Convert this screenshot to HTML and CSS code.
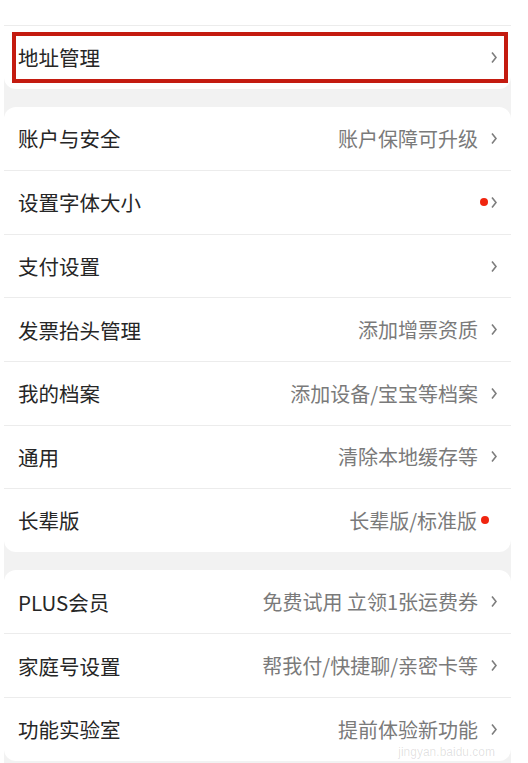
FILE: index.html
```html
<!DOCTYPE html>
<html lang="zh-CN">
<head>
  <meta charset="UTF-8">
  <meta name="viewport" content="width=device-width, initial-scale=1.0">
  <title>设置</title>
  <link rel="stylesheet" href="styles.css">
</head>
<body>
  <div class="screen">
    <div class="group top">
      <div class="spacer"></div>
      <div class="row marked">
        <span class="label">地址管理</span>
        <span class="extra"><svg class="chev" viewBox="0 0 6 13"><path d="M1 1.5 L5 6.5 L1 11.5"/></svg></span>
      </div>
    </div>

    <div class="group">
      <div class="row">
        <span class="label">账户与安全</span>
        <span class="extra">账户保障可升级<svg class="chev gap" viewBox="0 0 6 13"><path d="M1 1.5 L5 6.5 L1 11.5"/></svg></span>
      </div>
      <div class="row">
        <span class="label">设置字体大小</span>
        <span class="extra"><i class="dot"></i><svg class="chev" viewBox="0 0 6 13"><path d="M1 1.5 L5 6.5 L1 11.5"/></svg></span>
      </div>
      <div class="row">
        <span class="label">支付设置</span>
        <span class="extra"><svg class="chev" viewBox="0 0 6 13"><path d="M1 1.5 L5 6.5 L1 11.5"/></svg></span>
      </div>
      <div class="row">
        <span class="label">发票抬头管理</span>
        <span class="extra">添加增票资质<svg class="chev gap" viewBox="0 0 6 13"><path d="M1 1.5 L5 6.5 L1 11.5"/></svg></span>
      </div>
      <div class="row">
        <span class="label">我的档案</span>
        <span class="extra">添加设备/宝宝等档案<svg class="chev gap" viewBox="0 0 6 13"><path d="M1 1.5 L5 6.5 L1 11.5"/></svg></span>
      </div>
      <div class="row">
        <span class="label">通用</span>
        <span class="extra">清除本地缓存等<svg class="chev gap" viewBox="0 0 6 13"><path d="M1 1.5 L5 6.5 L1 11.5"/></svg></span>
      </div>
      <div class="row">
        <span class="label">长辈版</span>
        <span class="extra">长辈版/标准版<i class="dot after"></i></span>
      </div>
    </div>

    <div class="group">
      <div class="row">
        <span class="label">PLUS会员</span>
        <span class="extra">免费试用&nbsp;立领1张运费券<svg class="chev gap" viewBox="0 0 6 13"><path d="M1 1.5 L5 6.5 L1 11.5"/></svg></span>
      </div>
      <div class="row">
        <span class="label">家庭号设置</span>
        <span class="extra">帮我付/快捷聊/亲密卡等<svg class="chev gap" viewBox="0 0 6 13"><path d="M1 1.5 L5 6.5 L1 11.5"/></svg></span>
      </div>
      <div class="row">
        <span class="label">功能实验室</span>
        <span class="extra">提前体验新功能<svg class="chev gap" viewBox="0 0 6 13"><path d="M1 1.5 L5 6.5 L1 11.5"/></svg></span>
      </div>
    </div>

    <div class="watermark">jingyan.baidu.com</div>
  </div>
</body>
</html>
```

FILE: styles.css
```css
body {
  margin: 0;
  background: #fff;
  font-family: "Noto Sans CJK SC", "Noto Sans", sans-serif;
}
.screen {
  position: relative;
  width: 507px;
  margin-left: 4px;
  height: 763px;
  overflow: hidden;
  background: #f2f2f2;
}
.group {
  background: #fff;
  border-radius: 12px;
  margin-top: 18px;
}
.group.top {
  margin-top: 0;
  border-radius: 0 0 12px 12px;
}
.group:last-of-type {
  margin-top: 19px;
}
.spacer {
  height: 25px;
}
.row {
  box-sizing: border-box;
  height: 63.6px;
  display: flex;
  align-items: center;
  justify-content: space-between;
  padding: 0 14px;
  border-top: 1px solid #ececec;
}
.group .row:first-child {
  border-top: none;
}
.label {
  font-size: 20.5px;
  color: #262626;
}
.extra {
  display: flex;
  align-items: center;
  font-size: 20px;
  color: #7a7a7a;
}
.chev {
  width: 6px;
  height: 13px;
  fill: none;
  stroke: #7d7d7d;
  stroke-width: 1.6;
}
.chev.gap {
  margin-left: 13px;
}
.dot {
  display: inline-block;
  width: 8px;
  height: 8px;
  border-radius: 50%;
  background: #f0250f;
  margin-right: 3px;
}
.dot.after {
  margin: 0 8px 0 4px;
}
.marked {
  position: relative;
}
/* red annotation frame drawn over the row */
.marked::after {
  content: "";
  position: absolute;
  top: 6px;
  bottom: 6px;
  left: 8px;
  right: 3px;
  border: 4px solid #c41b10;
}
.watermark {
  position: absolute;
  right: 16px;
  bottom: 4px;
  font-family: "Liberation Sans", sans-serif;
  font-size: 12px;
  color: rgba(0, 0, 0, 0.12);
}
```
